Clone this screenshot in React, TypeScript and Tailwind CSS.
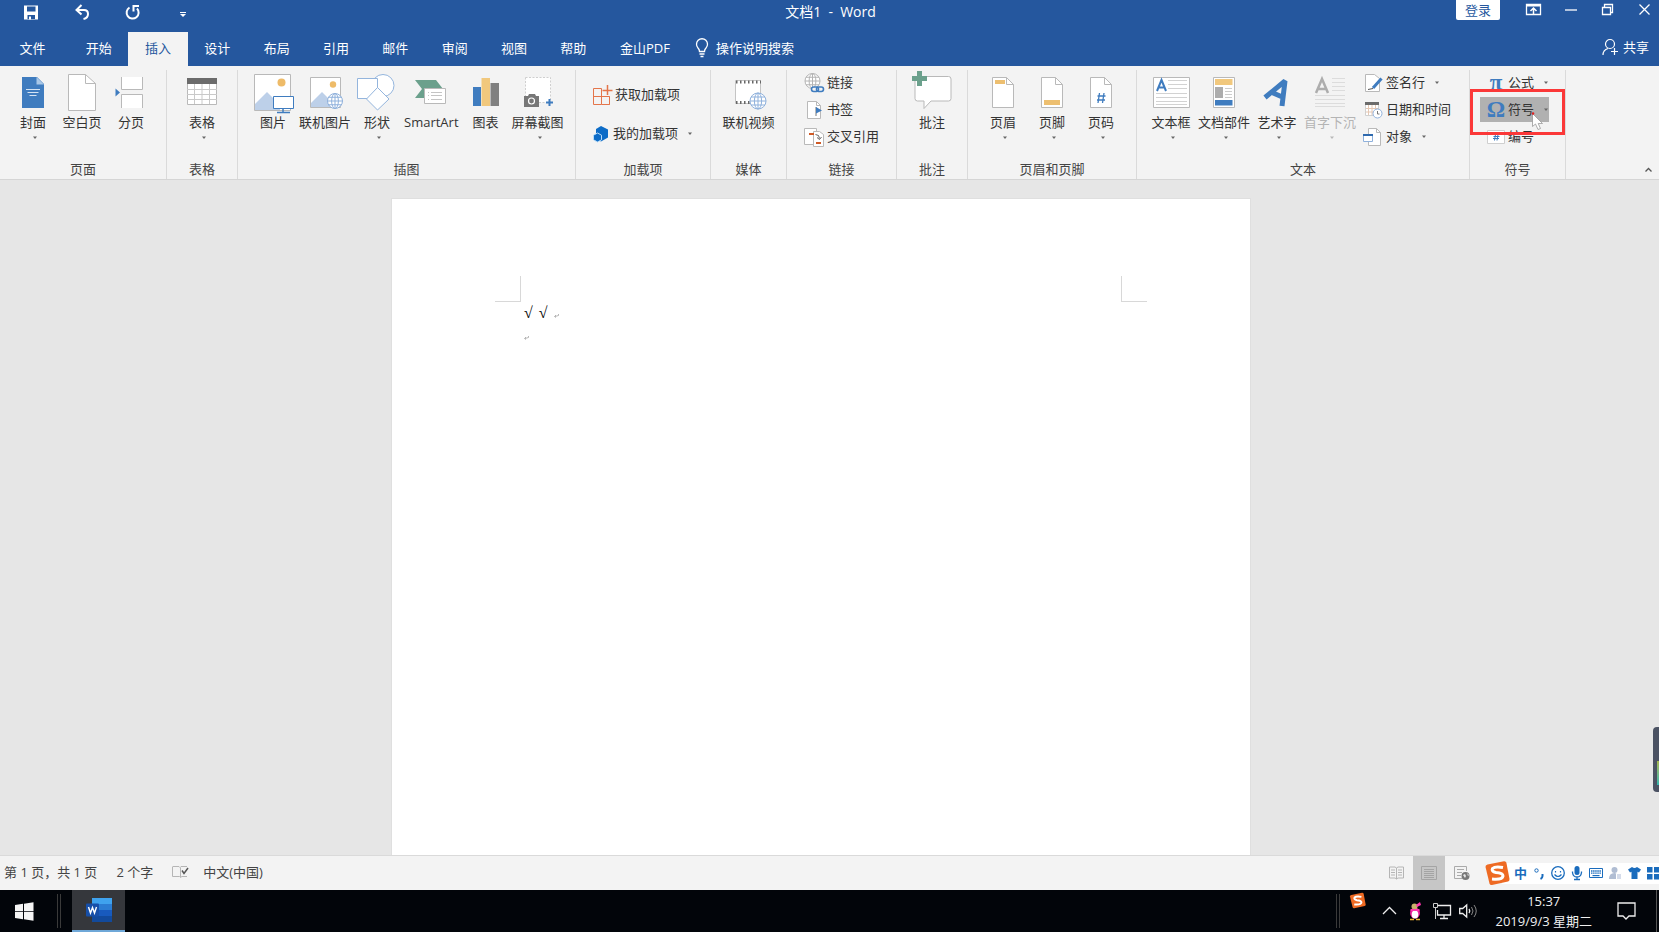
import React from "react";

const BLUE = "#3f7cbf";
const GREY = "#b9b9b9";

function Caret({ muted }: { muted?: boolean }) {
  return (
    <svg width="6" height="4" viewBox="0 0 6 4" className="shrink-0" aria-hidden="true">
      <path d="M1 .5h4L3 3z" fill={muted ? "#b8b8b8" : "#666"} />
    </svg>
  );
}

function Svg({ children, w = 40, h = 43 }: { children: React.ReactNode; w?: number; h?: number }) {
  return (
    <svg width={w} height={h} viewBox={`0 0 ${w} ${h}`} className="shrink-0 overflow-visible" fill="none" aria-hidden="true">
      {children}
    </svg>
  );
}

function Globe({ x, y, r, color }: { x: number; y: number; r: number; color: string }) {
  return (
    <g stroke={color} strokeWidth="1">
      <circle cx={x} cy={y} r={r} fill="#fff" />
      <ellipse cx={x} cy={y} rx={r * 0.45} ry={r} />
      <path d={`M${x} ${y - r}v${2 * r}M${x - r} ${y}h${2 * r}M${x - r * 0.87} ${y - r / 2}h${r * 1.74}M${x - r * 0.87} ${y + r / 2}h${r * 1.74}`} />
    </g>
  );
}

function Sheet({ children }: { children?: React.ReactNode }) {
  return (
    <Svg>
      <path d="M9.500 7.500h14l7 7v23h-21z" fill="#fff" stroke={GREY} />
      <path d="M23.500 7.500v7h7" stroke={GREY} />
      {children}
    </Svg>
  );
}

const CoverIcon = () => (
  <Svg>
    <path d="M9 7h15l7 7v24H9z" fill={BLUE} />
    <path d="M23.500 7v7.500H31z" fill="#a9c8e8" />
    <path d="M13 19.500h14M14.500 22.500h11M16.500 25.500h7" stroke="#d5e4f4" />
  </Svg>
);
const BlankIcon = () => (
  <Svg>
    <path d="M6.500 4.500h17l10 9v27h-27z" fill="#fff" stroke={GREY} />
    <path d="M23.500 4.500v9h10" stroke={GREY} />
  </Svg>
);
const BreakIcon = () => (
  <Svg>
    <path d="M10 7h22v13H10zM10 25h22v13H10z" fill="#fff" />
    <path d="M10.500 7v12.500h21V7M10.500 38V24.500h21V38" stroke={GREY} />
    <path d="M4.500 18.500l4.500 4-4.500 4z" fill={BLUE} />
  </Svg>
);
const TableIcon = () => (
  <Svg>
    <path d="M5.500 8.500h29v26h-29z" fill="#fff" stroke={GREY} />
    <path d="M5 8h30v6H5z" fill="#6b6b6b" />
    <path d="M12.500 14v20M20 14v20M27.500 14v20M5 19.500h30M5 24.500h30M5 29.500h30" stroke="#c9c9c9" />
  </Svg>
);
const PictureIcon = () => (
  <Svg>
    <path d="M1.500 4.500h36v36h-36z" fill="#fff" stroke={GREY} />
    <circle cx="28.500" cy="12.500" r="4" fill="#eebb68" />
    <path d="M2 40V34L14 22l13 13v5z" fill="#bdd0e9" />
    <path d="M20.500 26.500h20v12h-20z" fill="#fff" stroke={BLUE} />
    <path d="M30 39v3M24 42.500h13" stroke={BLUE} strokeWidth="1.500" />
  </Svg>
);
const OnlinePictureIcon = () => (
  <Svg>
    <path d="M5.500 7.500h30v30h-30z" fill="#fff" stroke={GREY} />
    <circle cx="28" cy="14.500" r="3.200" fill="#eebb68" />
    <path d="M6 37v-4l11-11 12 12v3z" fill="#bdd0e9" />
    <Globe x={30} y={31} r={7.500} color="#8fb1dc" />
  </Svg>
);
const ShapesIcon = () => (
  <Svg>
    <g fill="#fff" stroke="#94b5dd">
      <circle cx="26" cy="15.500" r="11" />
      <path d="M.5 8.500h20v20H.5z" />
      <path d="M20.500 17.500L32 29 20.500 40 9.500 29z" />
    </g>
  </Svg>
);
const SmartArtIcon = () => (
  <Svg>
    <path d="M4 10h21l7 9-7 9H4l7-9z" fill="#6ba08c" />
    <path d="M13.500 18.500h21v15h-21z" fill="#fff" stroke={GREY} />
    <path d="M20 22.500h11M20 25.500h11M20 29.500h11M17 22.500h1M17 25.500h1M17 29.500h1" stroke="#c4c4c4" />
  </Svg>
);
const ChartIcon = () => (
  <Svg>
    <path d="M7 17h8v19H7z" fill={BLUE} />
    <path d="M15.500 8h8.500v28h-8.500z" fill="#f1c87d" />
    <path d="M24.500 13H33v23h-8.500z" fill="#808080" />
  </Svg>
);
const ScreenshotIcon = () => (
  <Svg>
    <path d="M7.500 7.500h25v25h-25z" fill="#fff" stroke="#cfcfcf" strokeDasharray="2 1.500" />
    <path d="M6 26h4l1-2h6l1 2h3v11H6z" fill="#777" />
    <circle cx="13.500" cy="31" r="3" stroke="#fff" strokeWidth="1.200" fill="#777" />
    <path d="M31.500 29v7M28 32.500h7" stroke={BLUE} strokeWidth="2" />
  </Svg>
);
const VideoIcon = () => (
  <Svg>
    <path d="M7.500 10.500h25v23h-25z" fill="#fff" stroke="#c4c4c4" />
    <path d="M8 12h25M8 32.500h22" stroke="#666" strokeWidth="3" strokeDasharray="1.500 2.500" />
    <Globe x={30} y={31} r={8} color="#8fb1dc" />
  </Svg>
);
const CommentIcon = () => (
  <Svg>
    <path d="M5.500 6.500h31q2.500 0 2.500 2.500v19.500q0 2.500-2.500 2.500H19l-7 7.500v-7.500H5.500Q3 31 3 28.500V9q0-2.500 2.500-2.500z" fill="#fff" stroke={GREY} />
    <path d="M7.500 1v15M0 8.500h15" stroke="#6ba08c" strokeWidth="5" />
  </Svg>
);
const HeaderIcon = () => (
  <Sheet><path d="M12 10h10v4H12z" fill="#edbf70" /></Sheet>
);
const FooterIcon = () => (
  <Sheet><path d="M12 30h16v5H12z" fill="#edbf70" /></Sheet>
);
const PageNumberIcon = () => (
  <Sheet><path d="M18.500 23l-1.500 10M23 23l-1.500 10M16.500 26h8M16 30h8" stroke={BLUE} strokeWidth="1.300" /></Sheet>
);
const TextBoxIcon = () => (
  <Svg>
    <path d="M2.500 7.500h36v30h-36z" fill="#fff" stroke={GREY} />
    <path d="M17 10.500h19M17 14.500h19M17 18.500h19M5 23.500h31M5 27.500h31M5 31.500h31M5 34.500h31" stroke="#d2d2d2" />
    <path d="M6 21l4.500-11L15 21M7.500 17.500h6" stroke={BLUE} strokeWidth="2" />
  </Svg>
);
const PartsIcon = () => (
  <Svg>
    <path d="M9.500 7.500h21v30h-21z" fill="#fff" stroke={GREY} />
    <path d="M11 9h17.500v6H11z" fill="#f1c87d" />
    <path d="M11 17h8v11h-8z" fill="#adadad" />
    <path d="M21 18.500h7M21 21.500h7M21 24.500h7M21 27.500h7" stroke="#ccc" />
    <path d="M11 30h17.500v5.500H11z" fill={BLUE} />
  </Svg>
);
const WordArtIcon = () => (
  <Svg>
    <path d="M8 27.500L28 11l-3 25M15 22.500l11.500 5" stroke={BLUE} strokeWidth="5" strokeLinejoin="bevel" />
  </Svg>
);
const DropCapIcon = () => (
  <Svg>
    <path d="M22 8.500h13M22 12.500h13M22 16.500h13M22 20.500h13M5 25.500h30M5 29.500h30M5 33.500h30M5 36.500h30" stroke="#dcdcdc" />
    <path d="M6 23l6-14 6 14M8 19h8" stroke="#adadad" strokeWidth="2.500" />
  </Svg>
);

const SmallSheet = ({ children }: { children?: React.ReactNode }) => (
  <Svg w={20} h={20}>
    <path d="M3.500 1.500h9l4 4v13h-13z" fill="#fff" stroke={GREY} />
    <path d="M12.500 1.500v4h4" stroke={GREY} />
    {children}
  </Svg>
);
const AddinsIcon = () => (
  <Svg w={20} h={20}>
    <path d="M1.500 3.500h8v16h-8zM1.500 11.500h16v8h-8M17.500 11.500v8" stroke="#e4754a" />
    <path d="M15.500 0v10M10.500 5.500h10" stroke="#e4754a" strokeWidth="1.500" />
  </Svg>
);
const MyAddinsIcon = () => (
  <Svg w={18} h={18}>
    <path d="M9 1l7 3.500v8L9 16.500 4 14V4z" fill="#0d6cc7" />
    <path d="M5.500 8l4 2.200v4.600l-4 2.200-4-2.200v-4.600z" fill="#0d6cc7" stroke="#b9dcf8" />
  </Svg>
);
const LinkIcon = () => (
  <Svg w={20} h={20}>
    <Globe x={8.500} y={8} r={7.500} color="#b4b4b4" />
    <g stroke={BLUE} strokeWidth="1.600" fill="#f3f3f3">
      <rect x="7.500" y="14" width="7" height="4.500" rx="2.200" />
      <rect x="12.500" y="14" width="7" height="4.500" rx="2.200" fill="none" />
    </g>
  </Svg>
);
const BookmarkIcon = () => (
  <SmallSheet><path d="M12 7v9" stroke="#777" /><path d="M12 7l6 3.500-6 3z" fill={BLUE} /></SmallSheet>
);
const CrossRefIcon = () => (
  <Svg w={20} h={20}>
    <path d="M.5 1.500h12v16H.5z" fill="#fff" stroke={GREY} />
    <path d="M9.500 4.500h6l4 3v12h-10z" fill="#fff" stroke={GREY} />
    <path d="M5 7h5M12 16h5" stroke="#cf5a26" strokeWidth="2" />
    <path d="M11.500 7.500q4 0 4 4M13 10.500l2.500 2 2-2.500" stroke="#666" />
  </Svg>
);
const SignatureIcon = () => (
  <Svg w={20} h={20}>
    <path d="M2.500 1.500h9l5 4v13h-14z" fill="#fff" stroke={GREY} />
    <path d="M18.500 5.500L10 15" stroke={BLUE} strokeWidth="3" />
    <path d="M5 16.500l5-1" stroke="#555" />
  </Svg>
);
const DateIcon = () => (
  <Svg w={20} h={20}>
    <path d="M2.500 2.500h13v13h-13z" fill="#fff" stroke="#d0d0d0" />
    <path d="M2 2h14v3H2z" fill="#6b6b6b" />
    <path d="M5.500 5v10M9 5v10M12.500 5v10M3 8.500h12M3 12h12" stroke="#e5c8b4" />
    <circle cx="14.500" cy="13.500" r="4.500" fill="#fff" stroke="#8fb1dc" />
    <path d="M14.500 11v3h2" stroke="#777" />
  </Svg>
);
const ObjectIcon = () => (
  <Svg w={20} h={20}>
    <path d="M5.500 1.500h8l4 4v13h-12z" fill="#fff" stroke={GREY} />
    <path d="M13.500 1.500v4h4" stroke={GREY} />
    <path d="M.5 7.500h9v7h-9z" fill="#fff" stroke="#8fb1dc" />
    <path d="M0 7h10v2H0z" fill="#2f6aae" />
  </Svg>
);
const MathGlyph = ({ children }: { children: string }) => (
  <span aria-hidden="true" className="flex w-[18px] justify-center font-['Liberation_Serif',serif] text-[23px] leading-5 font-bold text-[#3f7cbf]">
    {children}
  </span>
);
const NumberIcon = () => (
  <Svg w={18} h={20}>
    <path d="M.5 3.500h17v13H.5z" fill="#fff" stroke="#cfcfcf" />
    <path d="M8.500 7.500l-1 6M11 7.500l-1 6M6.500 9.500h6M6 11.500h6" stroke={BLUE} />
  </Svg>
);

function Big({ icon, label, caret, muted, pad }: { icon: React.ReactNode; label: string; caret?: boolean; muted?: boolean; pad?: string }) {
  return (
    <button type="button" disabled={muted} className={`flex flex-col items-center ${pad ?? "px-0"} ${muted ? "text-[#b4b4b4]" : "text-[#333]"}`}>
      {icon}
      <span className="leading-[18px]">{label}</span>
      <span className="flex h-[14px] items-center pl-1">{caret && <Caret muted={muted} />}</span>
    </button>
  );
}

function Small({ icon, label, caret, active }: { icon: React.ReactNode; label: string; caret?: boolean; active?: boolean }) {
  return (
    <button type="button" className={`flex h-[25px] items-center gap-[3px] text-[#333] ${active ? "bg-[#b1b1b1]" : ""}`}>
      {icon}
      <span className="pb-[2px] leading-[18px]">{label}</span>
      {caret && <span className="flex pl-[6px]"><Caret /></span>}
    </button>
  );
}

function Group({ name, width, children, body }: { name: string; width: string; children: React.ReactNode; body: string }) {
  return (
    <section aria-label={name} className={`flex shrink-0 flex-col ${width}`}>
      <div className="flex h-full flex-col border-r border-[#dadada] pb-px">
        <div className={`flex flex-1 items-start ${body}`}>{children}</div>
        <h2 className="text-center leading-[18px] text-[#444]">{name}</h2>
      </div>
    </section>
  );
}

const tabs = ["开始", "插入", "设计", "布局", "引用", "邮件", "审阅", "视图", "帮助"];

function TitleBar() {
  return (
    <div className="grid h-8 grid-cols-[1fr_auto_1fr] text-white">
      <div className="flex items-start pt-1 pl-[23px]">
        <button type="button" aria-label="保存" className="mr-9">
          <Svg w={16} h={18}><path d="M1 1.500h14v14H1z" fill="#fff" /><path d="M4 2.500h8.500v5H4zM4.500 11h7.500v4H4.500z" fill="#25579e" /><path d="M6 12.500h2v3H6z" fill="#fff" /></Svg>
        </button>
        <button type="button" aria-label="撤消" className="mr-[34px]">
          <Svg w={16} h={18}><path d="M6.500 1L1.500 6l5 4.500M2 6h7q4 0 4 4t-4.500 5" stroke="#fff" strokeWidth="2" /></Svg>
        </button>
        <button type="button" aria-label="重复" className="mr-[38px]">
          <Svg w={16} h={18}><path d="M4.500 3.500A6 6 0 1 0 12 4.500M8.500 7.500V2h5.500" stroke="#fff" strokeWidth="2" /></Svg>
        </button>
        <button type="button" aria-label="自定义快速访问工具栏">
          <Svg w={8} h={18}><path d="M1 8.500h6" stroke="#fff" /><path d="M1 10h6L4 13z" fill="#fff" /></Svg>
        </button>
      </div>
      <h1 className="pt-[3px] pl-[2px] text-[14px] leading-[18px] whitespace-pre">文档1  -  Word</h1>
      <div className="flex items-start justify-end pr-2">
        <button type="button" className="mr-[25px] h-5 rounded-b-xs bg-white px-[9px] leading-[19px] text-[#25579e]">登录</button>
        <button type="button" aria-label="功能区显示选项" className="mr-[23px]">
          <Svg w={17} h={20}><path d="M1.500 4.500h14v10h-14z" stroke="#fff" strokeWidth="1.300" /><path d="M1 5.500h15" stroke="#fff" strokeWidth="2" /><path d="M8.500 14V8.500M5.500 11l3-3 3 3" stroke="#fff" strokeWidth="1.500" /></Svg>
        </button>
        <button type="button" aria-label="最小化" className="mr-6"><Svg w={12} h={20}><path d="M0 10h12" stroke="#fff" strokeWidth="1.300" /></Svg></button>
        <button type="button" aria-label="还原" className="mr-6"><Svg w={13} h={20}><path d="M1.500 7.500h8v7h-8zM3.500 7V4.500h8v8H10" stroke="#fff" strokeWidth="1.300" /></Svg></button>
        <button type="button" aria-label="关闭"><Svg w={13} h={20}><path d="M1.500 4.500l10 10M11.500 4.500l-10 10" stroke="#fff" strokeWidth="1.300" /></Svg></button>
      </div>
    </div>
  );
}

function TabBar() {
  return (
    <nav aria-label="功能区选项卡" className="flex h-[34px] items-stretch text-white [&_button]:pb-[2px]">
      <button type="button" className="w-[69px] pr-1">文件</button>
      <div className="grid w-[534px] shrink-0 grid-cols-9">
        {tabs.map((t) => (
          <button key={t} type="button" className={t === "插入" ? "bg-[#f3f3f3] text-[#25579e]" : ""}>{t}</button>
        ))}
      </div>
      <button type="button" className="px-[17px]">金山PDF</button>
      <button type="button" className="flex items-center gap-[7px] px-2">
        <Svg w={14} h={20}>
          <path d="M4.500 13.500q0-2-1.500-3.500A5.500 5.500 0 1 1 11 10q-1.500 1.500-1.500 3.500zM4.500 16h5M5.500 18.500h3" stroke="#fff" strokeWidth="1.300" />
        </Svg>
        <span>操作说明搜索</span>
      </button>
      <button type="button" className="mr-[10px] mb-[3px] ml-auto flex items-center gap-1">
        <Svg w={17} h={18}>
          <circle cx="8" cy="6" r="4.500" stroke="#fff" strokeWidth="1.200" />
          <path d="M1 17q0-5 5-6.500M12.500 10v7M9 13.500h7" stroke="#fff" strokeWidth="1.200" />
        </Svg>
        <span>共享</span>
      </button>
    </nav>
  );
}

function Ribbon() {
  return (
    <div className="flex h-[114px] border-b border-[#d5d5d5] bg-[#f3f3f3] pt-1">
      <Group name="页面" width="w-[167px]" body="gap-px pl-3">
        <Big pad="px-[1px]" icon={<CoverIcon />} label="封面" caret />
        <Big pad="px-[7px]" icon={<BlankIcon />} label="空白页" />
        <Big pad="px-[1px]" icon={<BreakIcon />} label="分页" />
      </Group>
      <Group name="表格" width="w-[71px]" body="justify-center">
        <Big icon={<TableIcon />} label="表格" caret />
      </Group>
      <Group name="插图" width="w-[338px]" body="pl-[15px]">
        <Big icon={<PictureIcon />} label="图片" />
        <Big pad="px-[6px]" icon={<OnlinePictureIcon />} label="联机图片" />
        <Big icon={<ShapesIcon />} label="形状" caret />
        <Big pad="px-[7px]" icon={<SmartArtIcon />} label="SmartArt" />
        <Big icon={<ChartIcon />} label="图表" />
        <Big pad="px-[6px]" icon={<ScreenshotIcon />} label="屏幕截图" caret />
      </Group>
      <Group name="加载项" width="w-[135px]" body="pl-4">
        <div className="flex flex-col items-start gap-[14px] pt-3">
          <Small icon={<AddinsIcon />} label="获取加载项" />
          <Small icon={<MyAddinsIcon />} label="我的加载项" caret />
        </div>
      </Group>
      <Group name="媒体" width="w-[76px]" body="justify-center">
        <Big icon={<VideoIcon />} label="联机视频" />
      </Group>
      <Group name="链接" width="w-[110px]" body="pl-[17px]">
        <div className="flex flex-col items-start gap-[2px]">
          <Small icon={<LinkIcon />} label="链接" />
          <Small icon={<BookmarkIcon />} label="书签" />
          <Small icon={<CrossRefIcon />} label="交叉引用" />
        </div>
      </Group>
      <Group name="批注" width="w-[71px]" body="justify-center">
        <Big icon={<CommentIcon />} label="批注" />
      </Group>
      <Group name="页眉和页脚" width="w-[169px]" body="justify-center gap-[9px]">
        <Big icon={<HeaderIcon />} label="页眉" caret />
        <Big icon={<FooterIcon />} label="页脚" caret />
        <Big icon={<PageNumberIcon />} label="页码" caret />
      </Group>
      <Group name="文本" width="w-[333px]" body="gap-px pl-[11px]">
        <Big pad="px-[3px]" icon={<TextBoxIcon />} label="文本框" caret />
        <Big pad="px-[3px]" icon={<PartsIcon />} label="文档部件" caret />
        <Big pad="px-[3px]" icon={<WordArtIcon />} label="艺术字" caret />
        <Big pad="px-[3px]" icon={<DropCapIcon />} label="首字下沉" caret muted />
        <div className="flex flex-col items-start gap-[2px] pl-[3px]">
          <Small icon={<SignatureIcon />} label="签名行" caret />
          <Small icon={<DateIcon />} label="日期和时间" />
          <Small icon={<ObjectIcon />} label="对象" caret />
        </div>
      </Group>
      <Group name="符号" width="w-[96px]" body="relative">
        <div className="flex flex-col items-start gap-[2px] pl-[10px] [&>button]:px-[7px] [&>button]:pr-0">
          <Small icon={<MathGlyph>π</MathGlyph>} label="公式" caret />
          <Small icon={<MathGlyph>Ω</MathGlyph>} label="符号" caret active />
          <Small icon={<NumberIcon />} label="编号" />
        </div>
        <div className="pointer-events-none absolute inset-x-0 top-[19px] h-[46px] border-[3px] border-[#fb3838]" />
        <svg className="pointer-events-none absolute top-[42px] left-[61px]" width="14" height="20" viewBox="0 0 14 20" aria-hidden="true">
          <path d="M1.500 1.500v13l3-2.500 2.500 5.500 2.500-1-2.300-5h4.300z" fill="#fff" stroke="#999" strokeWidth=".8" />
          <circle cx="2" cy="1.500" r="1.300" fill="#e02020" />
        </svg>
      </Group>
      <button type="button" aria-label="折叠功能区" className="mt-auto mr-[6px] mb-[5px] ml-auto">
        <Svg w={9} h={8}><path d="M1.500 5.500l3-3 3 3" stroke="#555" strokeWidth="1.300" /></Svg>
      </button>
    </div>
  );
}

function ParagraphMark() {
  return (
    <svg width="5" height="4" viewBox="0 0 5 4" aria-hidden="true">
      <path d="M4.500 0v1.500L1 2.500M2 1L.5 2.500 2 3.500" fill="none" stroke="#999" strokeWidth=".7" />
    </svg>
  );
}

function Canvas() {
  return (
    <main className="relative flex flex-1 justify-center overflow-hidden bg-[#e6e6e6] pt-[18px] pr-[17px]">
      <article className="w-[860px] border border-b-0 border-[#dfdfdf] bg-white px-[103px] pt-[77px]">
        <div className="flex justify-between">
          <span className="size-[26px] border-r border-b border-[#d8d8d8]" />
          <span className="size-[26px] border-b border-l border-[#d8d8d8]" />
        </div>
        <div className="pl-[29px] font-['Liberation_Serif','Noto_Sans_CJK_SC',serif] text-[16px] leading-[22px] text-black">
          <p className="flex items-center gap-[6px]">
            <span>√</span>
            <span>√</span>
            <span className="pt-[6px]"><ParagraphMark /></span>
          </p>
          <p className="flex h-7 items-center"><ParagraphMark /></p>
        </div>
      </article>
      <div className="absolute right-0 bottom-[63px] flex h-[65px] w-[6px] items-end rounded-l-sm bg-[#4b5263] pb-[7px] pl-1">
        <span className="h-6 w-full bg-linear-to-b from-[#a5b84e] to-[#2fb5ad]" />
      </div>
    </main>
  );
}

function Sogou({ size }: { size: number }) {
  return (
    <svg width={size} height={size} viewBox="0 0 26 26" className="relative z-10 shrink-0" aria-hidden="true">
      <path d="M3.500 4.500L20 1.200q2-.2 2.400 1.600L25.500 19q.2 2-1.500 2.500L8 25q-2 .3-2.500-1.500L1.500 7q-.2-2 2-2.500z" fill="#ee6a23" />
      <path d="M19 7.500q-8-1.500-10.500 1-1.500 3 3.500 4 7 .5 7 3.500-.5 4-11 3" stroke="#fff" strokeWidth="3" fill="none" />
    </svg>
  );
}

function StatusBar() {
  const c = "#1a6cbd";
  return (
    <footer className="flex h-[35px] shrink-0 items-stretch border-t border-[#dadada] bg-[#f3f3f3] text-[#444]">
      <div className="flex items-center pb-[2px] pl-1">
        <span className="mr-[19px]">第 1 页，共 1 页</span>
        <span className="mr-[19px]">2 个字</span>
        <button type="button" aria-label="校对" className="mr-[14px]">
          <Svg w={17} h={16}><path d="M1 2.500h6l1 1 1-1h6M.5 2.500v10h7l1 1V3.500M9 13l1-.5h5" stroke="#b5b5b5" /><path d="M10 6.500l2 3 4-5.500" stroke="#555" strokeWidth="1.500" /></Svg>
        </button>
        <span>中文(中国)</span>
      </div>
      <div className="ml-auto flex items-center">
        <button type="button" aria-label="阅读视图" className="mr-2">
          <Svg w={17} h={16}><path d="M8.500 3L7 2H1.500v11H7l1.500 1 1.500-1h5.500V2H10zv11M3 5h4M3 7.500h4M3 10h4M10 5h4M10 7.500h4M10 10h4" stroke="#b5b5b5" /></Svg>
        </button>
        <button type="button" aria-label="页面视图" className="flex w-8 items-center justify-center self-stretch bg-[#c6c6c6]">
          <Svg w={16} h={16}><path d="M.5 1.500h15v13H.5zM3 4.500h10M3 6.500h10M3 8.500h10M3 10.500h10M3 12.500h10" stroke="#a4a4a4" /></Svg>
        </button>
        <button type="button" aria-label="Web 版式视图" className="mr-[14px] ml-2">
          <Svg w={17} h={16}><path d="M9 13.500H1.500v-12h12V6M4 4.500h7M4 7.500h5M4 10.500h4" stroke="#aaa" /><circle cx="12.500" cy="11" r="4" fill="#777" /><path d="M10 10l2-1 1 2-1 2zM14 8l2 2-1 1z" fill="#e8e8e8" /></Svg>
        </button>
        <div className="flex items-center">
          <Sogou size={26} />
          <div className="-ml-2 flex h-[21px] items-center gap-[6px] bg-white pl-3">
            <span className="pb-px font-bold text-[#1a6cbd]">中</span>
            <Svg w={12} h={14}><circle cx="3.500" cy="4.500" r="1.700" stroke={c} /><path d="M9.500 8v2q0 2-2 3" stroke={c} strokeWidth="2" /></Svg>
            <Svg w={14} h={14}><circle cx="7" cy="7" r="6.300" stroke={c} strokeWidth="1.300" /><path d="M4.500 5v1.500M9.500 5v1.500M3.500 8.500q3.500 4 7 0" stroke={c} strokeWidth="1.200" /></Svg>
            <Svg w={12} h={14}><rect x="3.500" y="0" width="5" height="9" rx="2.500" fill={c} /><path d="M1.500 5.500v1Q2 11 6 11t4.500-4.500v-1M6 11v3M3 13.500h6" stroke={c} strokeWidth="1.300" /></Svg>
            <Svg w={14} h={14}><path d="M.5 2.500h13v9H.5z" stroke={c} fill="#fff" /><path d="M2 5h10M2 7.200h10" stroke={c} strokeWidth="1.300" strokeDasharray="1.500 .6" /><path d="M3.500 9.600h7" stroke={c} strokeWidth="1.200" /></Svg>
            <Svg w={13} h={14}><circle cx="5.500" cy="4" r="3" fill="#b0bdd3" /><path d="M0 13q0-6 5.500-6 4 0 5 6z" fill="#b0bdd3" /><path d="M7.500 7.500h5v6h-5z" fill="#d5dcea" stroke="#fff" /></Svg>
            <Svg w={13} h={14}><path d="M4 1q2.500 2 5 0l4 2.500-2 3-1.500-.8V13h-6V5.700L2 6.500l-2-3z" fill={c} /></Svg>
            <Svg w={12} h={14}><path d="M0 1h5.500v5.500H0zM7 1h5v5.500H7zM0 8h5.500v5.500H0zM7 8h5v5.500H7z" fill={c} /></Svg>
          </div>
        </div>
      </div>
    </footer>
  );
}

function Taskbar() {
  return (
    <div className="flex h-[42px] shrink-0 items-stretch bg-[#02050a] text-[#f0f0f0]">
      <button type="button" aria-label="开始" className="pr-[23px] pl-[15px]">
        <Svg w={19} h={19}><path d="M0 3l8-1.200v7.400H0zM9 1.700L18.500.3v8.900H9zM0 10h8v7.200L0 16zM9 10h9.500v8.700L9 17.300z" fill="#f5f5f5" /></Svg>
      </button>
      <span className="my-1 mr-[11px] w-[4px] border-x border-[#3a3a3a]" />
      <button type="button" aria-label="Word" className="flex w-[53px] items-center justify-center border-b-2 border-[#6fa8d8] bg-[#35373c]">
        <Svg w={26} h={26}>
          <path d="M6 1h20v6H6z" fill="#3fa2ee" /><path d="M6 7h20v6H6z" fill="#2b7cd3" /><path d="M6 13h20v6H6z" fill="#185abd" /><path d="M6 19h20v6H6z" fill="#124a9c" />
          <rect x="0" y="6.500" width="13" height="13" rx="1" fill="#174fa8" />
          <path d="M2.500 10l2 6 2-5.500 2 5.500 2-6" stroke="#fff" strokeWidth="1.400" />
        </Svg>
      </button>
      <div className="ml-auto flex items-center">
        <span className="mr-[9px] h-[34px] w-[4px] border-x border-[#3a3a3a]" />
        <span className="mr-4 self-start pt-[2px]"><Sogou size={17} /></span>
        <button type="button" aria-label="显示隐藏的图标" className="mr-[11px]"><Svg w={15} h={16}><path d="M1 11l6.500-6.500L14 11" stroke="#eee" strokeWidth="1.300" /></Svg></button>
        <span className="mr-[11px]">
          <Svg w={14} h={18}>
            <ellipse cx="7" cy="11" rx="5" ry="5.500" fill="#e6209a" /><ellipse cx="7" cy="12.500" rx="3.300" ry="4" fill="#fff" />
            <circle cx="6.500" cy="4.500" r="3" fill="#c9b06a" /><path d="M8 3l4-3 1 3-4 2z" fill="#ff35ad" /><path d="M2.500 8h9" stroke="#ff35ad" strokeWidth="2" /><path d="M2 17.500h4M8 17.500h4" stroke="#edb530" strokeWidth="1.500" />
          </Svg>
        </span>
        <button type="button" aria-label="网络" className="mr-2"><Svg w={18} h={18}><path d="M5 3.500h12.500v9.500H4.500V8M11 13v3M7 16.500h8" stroke="#eee" strokeWidth="1.300" /><path d="M.5 1.500h4v4h-4zM2.500 6v11" stroke="#ccc" /></Svg></button>
        <button type="button" aria-label="音量" className="mr-[18px]"><Svg w={18} h={18}><path d="M.7 6.500h3l4-3.500v12l-4-3.500h-3z" stroke="#eee" strokeWidth="1.300" /><path d="M10 7q1.500 2 0 4" stroke="#eee" strokeWidth="1.300" /><path d="M12.500 5q3 4 0 8M15 3q4.500 6 0 12" stroke="#888" /></Svg></button>
        <div className="mr-[25px] text-center leading-5"><div>15:37</div><div>2019/9/3 星期二</div></div>
        <button type="button" aria-label="通知" className="mr-5"><Svg w={19} h={18}><path d="M1 1h17v13h-6l-3 3-3-3H1z" stroke="#eee" strokeWidth="1.300" /></Svg></button>
        <span className="w-[3px] self-stretch border-l border-[#555]" />
      </div>
    </div>
  );
}

export default function App() {
  return (
    <div className="flex h-screen flex-col overflow-hidden font-['Open_Sans','Noto_Sans_CJK_SC',sans-serif] text-[13px] leading-[18px]">
      <header className="shrink-0 bg-[#25579e]">
        <TitleBar />
        <TabBar />
        <Ribbon />
      </header>
      <Canvas />
      <StatusBar />
      <Taskbar />
    </div>
  );
}
